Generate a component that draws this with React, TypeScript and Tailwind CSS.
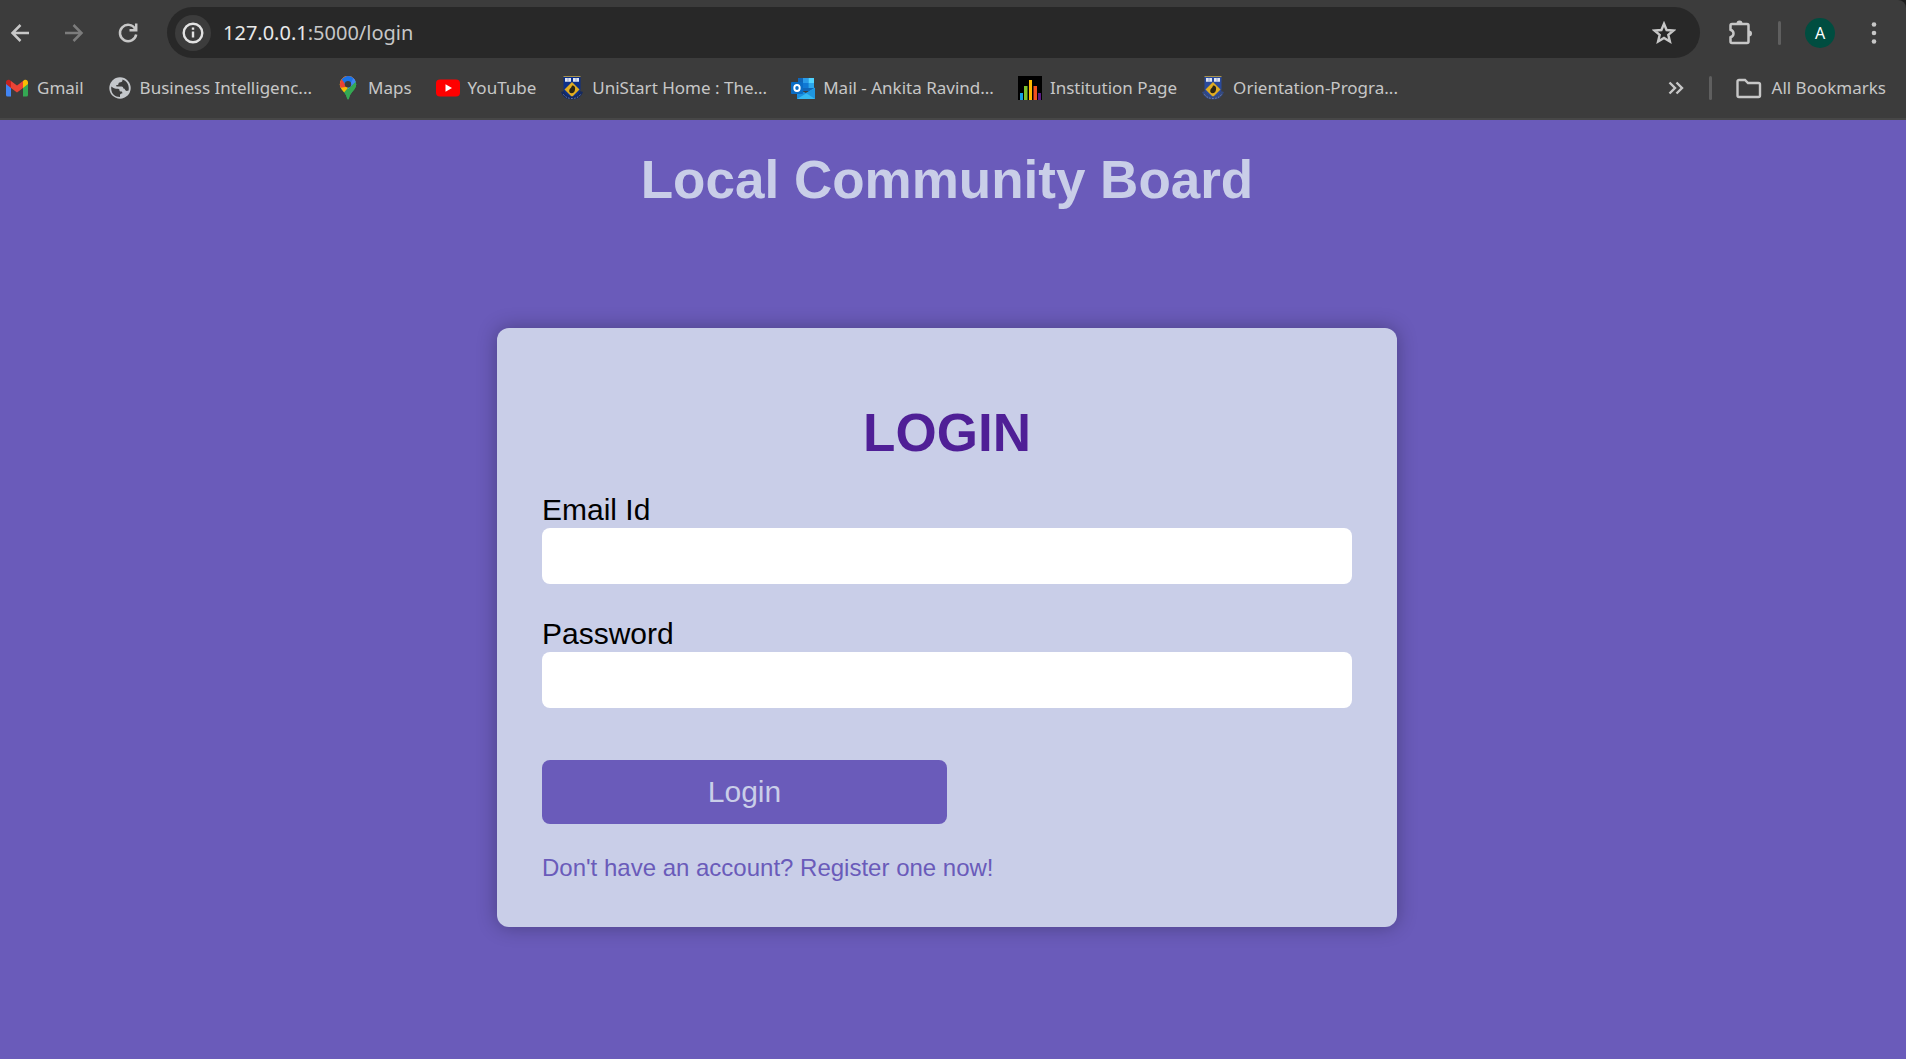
import React from "react";

const iconProps = { fill: "none", stroke: "currentColor", strokeWidth: 2 };

function BackIcon() {
  return (
    <svg viewBox="0 0 24 24" className="size-6" {...iconProps} strokeWidth={2.5}>
      <path d="M21 12H4.500M12.500 4 4.500 12l8 8" />
    </svg>
  );
}

function ForwardIcon() {
  return (
    <svg viewBox="0 0 24 24" className="size-6" {...iconProps} strokeWidth={2.5}>
      <path d="M3 12h16.500M11.500 4l8 8-8 8" />
    </svg>
  );
}

function ReloadIcon() {
  return (
    <svg viewBox="0 0 24 24" className="size-6" {...iconProps} strokeWidth={2.5}>
      <path d="M19.300 8A8.200 8.200 0 1 0 20.200 13.500" />
      <path d="M20.200 2.500v6.700h-6.700" />
    </svg>
  );
}

function InfoIcon() {
  return (
    <svg viewBox="0 0 24 24" className="size-6" {...iconProps}>
      <circle cx="12" cy="12" r="9.300" strokeWidth="2.400" />
      <path d="M12 10.500v6M12 6.500v2.300" strokeWidth="2.400" />
    </svg>
  );
}

function StarIcon() {
  return (
    <svg viewBox="0 0 24 24" className="size-6" {...iconProps} strokeWidth={2.4}>
      <path d="m12 2.800 2.600 6.200 6.900.5-5.200 4.400 1.600 6.600-5.900-3.500-5.900 3.500 1.600-6.600L2.500 9.500l6.900-.5z" />
    </svg>
  );
}

function PuzzleIcon() {
  return (
    <svg viewBox="0 0 28 28" className="size-7" {...iconProps}>
      <path
        d="M6 5h15a1.500 1.500 0 0 1 1.500 1.500v16a1.500 1.500 0 0 1-1.500 1.500h-15a1.500 1.500 0 0 1-1.500-1.500v-4.200c2-.7 3-2 3-3.800s-1-3.100-3-3.800V6.500a1.500 1.500 0 0 1 1.500-1.500z"
        strokeWidth="2.500"
      />
      <path d="M10.500 4.500a3 3 0 0 1 6 0zM23 11.500a3 3 0 0 1 0 6z" fill="currentColor" stroke="none" />
    </svg>
  );
}

function MoreIcon() {
  return (
    <svg viewBox="0 0 24 24" className="size-6" fill="currentColor">
      <circle cx="12" cy="3.500" r="2.300" />
      <circle cx="12" cy="12" r="2.300" />
      <circle cx="12" cy="20.500" r="2.300" />
    </svg>
  );
}

function ChevronsIcon() {
  return (
    <svg viewBox="0 0 24 24" className="size-6" {...iconProps} strokeWidth={2.4}>
      <path d="m6.500 6.500 5.500 5.500-5.500 5.500M13.500 6.500l5.500 5.500-5.500 5.500" />
    </svg>
  );
}

function FolderIcon() {
  return (
    <svg viewBox="0 0 26 24" className="h-6 w-[26px]" {...iconProps} strokeWidth={2.4}>
      <path d="M3 4h6l3 3h10.500a1.500 1.500 0 0 1 1.500 1.500v11a1.500 1.500 0 0 1-1.500 1.500h-19.500a1.500 1.500 0 0 1-1.500-1.500v-14A1.500 1.500 0 0 1 3 4z" />
    </svg>
  );
}

function GmailIcon() {
  return (
    <svg viewBox="0 0 24 24" className="size-6">
      <path d="M1 6v13a1.500 1.500 0 0 0 1.500 1.500H6V10z" fill="#4285f4" />
      <path d="M23 6v13a1.500 1.500 0 0 1-1.500 1.500H18V10z" fill="#34a853" />
      <path d="M6 5v7l6 4.500 6-4.500V5l-6 4.500z" fill="#ea4335" />
      <path d="M1 6.500V8l5 4V5l-1-.7C3.200 3 1 4.300 1 6.500z" fill="#c5221f" />
      <path d="M23 6.500V8l-5 4V5l1-.7c1.800-1.300 4 0 4 2.200z" fill="#fbbc04" />
    </svg>
  );
}

function GlobeIcon() {
  return (
    <svg viewBox="0 0 24 24" className="size-6">
      <circle cx="12" cy="12" r="10.700" fill="#c4c7cb" />
      <path
        d="M3.200 12.500c0-1 0-1.200.3-2 1.500 1.500 3.500 2.300 6.500 2.300 1 0 1.500.7 1.500 1.700 0 .8.500 1 1.500 1s1.300.5 1.300 1.300v.7c-1.500 0-2.300.6-2.300 1.500v2C7 21 3.200 17.500 3.200 12.500z"
        fill="#3c3c3c"
      />
      <path
        d="M14.500 3.500c0 1.800-.5 2.500-2 2.700-1.500.1-2 .6-2 1.600s-.5 1.200-1.500 1.300c-1.200.1-1.300 1.400 0 1.500h4.500c1.200 0 1.800.8 1.800 1.900 1.200 0 1.700.6 1.900 1.600.3 1 1.800 1 3.400.4C21.500 10 19.500 5.300 14.500 3.500z"
        fill="#3c3c3c"
      />
    </svg>
  );
}

function MapsIcon() {
  return (
    <svg viewBox="0 0 24 24" className="size-6">
      <defs>
        <clipPath id="pin">
          <path d="M12 0a8.200 8.200 0 0 0-8.200 8.200c0 3 1.500 4.800 3.600 7.300 2 2.500 3 4 3.600 6.800.3 1.700 1.700 1.700 2 0 .6-2.800 1.600-4.300 3.600-6.800 2.100-2.500 3.600-4.300 3.600-7.300A8.200 8.200 0 0 0 12 0z" />
        </clipPath>
      </defs>
      <g clipPath="url(#pin)">
        <path d="M0 0h24v24H0z" fill="#34a853" />
        <path d="M2 0h20L5 20H2z" fill="#fbbc04" />
        <path d="M0 0h24L9.500 11 3 12z" fill="#ea4335" />
        <path d="M5.500 3 12-1h5l3 4-8 9-3-4z" fill="#1a73e8" />
        <path d="m18 1 4 6-11 13 1-8z" fill="#4285f4" />
        <path d="m20.500 5 .5 7-9 12-4-7z" fill="#34a853" />
      </g>
      <circle cx="12" cy="8.200" r="3.200" fill="#3c3c3c" />
    </svg>
  );
}

function YouTubeIcon() {
  return (
    <svg viewBox="0 0 24 24" className="size-6">
      <rect y="3.500" width="24" height="17" rx="4" fill="#f00" />
      <path d="m9.500 8.300 6.500 3.700-6.500 3.700z" fill="#fff" />
    </svg>
  );
}

function CrestIcon({ blue, band }: { blue: string; band: string }) {
  return (
    <svg viewBox="0 0 24 24" className="size-6">
      <path d="M3.500 1h17v12c0 4-3.500 7-8.500 9-5-2-8.500-5-8.500-9z" fill={blue} />
      <path d="M3.500.500h17" stroke="#a8924a" />
      <path d="M5 2h6v3.800H5zM13 2h6v3.800h-6z" fill="#dfe5f2" />
      <path d="M8 2v3.800M16 2v3.800" stroke="#8899c8" strokeWidth=".8" />
      <path d="m12 6 7.500 7.500L12 21l-7.500-7.500z" fill="#e0ac20" />
      <path d="M12 9.500c2.700 0 3.500 2 3 4.200-.3 2.300-1.500 3.500-3.300 3.500-2 0-2.900-1.400-2.300-3.400.6-1.700 2.100-1.900 2.600-4.300z" fill="#2b2413" />
      <path d="M2.500 15.500c1.500 4.500 5.200 6.500 9.500 6.500s8-2 9.500-6.500" fill="none" stroke={band} strokeWidth="3.200" />
      <path d="M3.500 18.500c2 2.800 5 4 8.500 4s6.500-1.200 8.500-4" fill="none" stroke="#7f90c0" strokeDasharray="1.200 1.800" />
    </svg>
  );
}

function OutlookIcon() {
  return (
    <svg viewBox="0 0 24 24" className="size-6">
      <path d="M7 2h16v13H7z" fill="#1066b8" />
      <path d="M12 2h5.500v5H12z" fill="#2a9be8" />
      <path d="M17.500 2H23v5h-5.500z" fill="#50d4ff" />
      <path d="M12 7h5.500v5H12z" fill="#0f78d4" />
      <path d="M17.500 7H23v5h-5.500z" fill="#2ba6ec" />
      <path d="M6 12.500 15 17l9-5.500V23H6z" fill="#1a8fe0" />
      <path d="M6 23 24 12v11z" fill="#35b8f1" />
      <path d="m15 17 9 6V12z" fill="#1f96e0" />
      <rect y="6" width="12" height="12" rx="1" fill="#0a6cc4" />
      <ellipse cx="6" cy="12" rx="2.700" ry="3" fill="none" stroke="#fff" strokeWidth="1.900" />
    </svg>
  );
}

function BarsIcon() {
  return (
    <svg viewBox="0 0 24 24" className="size-6">
      <path d="M0 0h24v24H0z" fill="#000" />
      <path d="M2 17h3v7H2z" fill="#12a0e6" />
      <path d="M6 10h3.500v14H6z" fill="#7cc12c" />
      <path d="M11 4h3v20h-3z" fill="#ffb900" />
      <path d="M15.500 10H19v14h-3.500z" fill="#f2501e" />
      <path d="M20 17h3v7h-3z" fill="#5a1a83" />
    </svg>
  );
}

const bookmarks = [
  { label: "Gmail", icon: <GmailIcon /> },
  { label: "Business Intelligenc...", icon: <GlobeIcon /> },
  { label: "Maps", icon: <MapsIcon /> },
  { label: "YouTube", icon: <YouTubeIcon /> },
  { label: "UniStart Home : The...", icon: <CrestIcon blue="#0b2f8a" band="#15295f" /> },
  { label: "Mail - Ankita Ravind...", icon: <OutlookIcon /> },
  { label: "Institution Page", icon: <BarsIcon /> },
  { label: "Orientation-Progra...", icon: <CrestIcon blue="#2a4a9c" band="#34497f" /> },
];

function BrowserBar() {
  return (
    <header className="border-b-2 border-[#474747] bg-[#1f1f1f] font-['Noto_Sans','Open_Sans',sans-serif] text-[#c7c7c7]">
      <div className="rounded-tr-lg bg-[#3c3c3c]">
        <div className="flex h-[65px] items-center pr-5 pl-2">
          <div className="flex items-center gap-[30px]">
            <button aria-label="Back"><BackIcon /></button>
            <button aria-label="Forward" className="text-[#7c7c7c]"><ForwardIcon /></button>
            <button aria-label="Reload"><ReloadIcon /></button>
          </div>
          <div className="ml-[27px] flex h-[51px] flex-1 items-center gap-3 rounded-full bg-[#282828] px-2">
            <button aria-label="View site information" className="flex size-9 items-center justify-center rounded-full bg-[#3c3c3c] text-[#e3e3e3]">
              <InfoIcon />
            </button>
            <div className="relative flex-1 text-xl">
              <input aria-label="Address" defaultValue="127.0.0.1:5000/login" className="w-full bg-transparent text-transparent outline-none" />
              <span aria-hidden="true" className="pointer-events-none absolute inset-0">
                <span className="text-[#e8e8e8]">127.0.0.1</span>:5000/login
              </span>
            </div>
            <button aria-label="Bookmark this tab" className="mr-4"><StarIcon /></button>
          </div>
          <button aria-label="Extensions" className="ml-[26px]"><PuzzleIcon /></button>
          <span className="ml-6 h-6 w-[3px] rounded-full bg-[#5f5f5f]" />
          <button aria-label="Profile" className="ml-6 flex size-[30px] items-center justify-center rounded-full bg-[#004d40] text-base text-white">A</button>
          <button aria-label="Menu" className="ml-[27px]"><MoreIcon /></button>
        </div>
        <nav aria-label="Bookmarks" className="flex h-[53px] items-start pt-[11px] pr-5 pl-[5px] text-[17px] leading-6">
          <div className="flex flex-1 gap-6">
            {bookmarks.map((item) => (
              <a key={item.label} href="#" className="flex items-center gap-2 whitespace-nowrap">
                {item.icon}
                {item.label}
              </a>
            ))}
          </div>
          <button aria-label="More bookmarks"><ChevronsIcon /></button>
          <span className="ml-[22px] h-6 w-[3px] rounded-full bg-[#5f5f5f]" />
          <button className="ml-6 flex items-center gap-[10px] whitespace-nowrap">
            <FolderIcon />
            All Bookmarks
          </button>
        </nav>
      </div>
    </header>
  );
}

function Field({ id, label, type }: { id: string; label: string; type: string }) {
  return (
    <div className="flex flex-col gap-[2px]">
      <label htmlFor={id} className="leading-8 text-black">{label}</label>
      <input id={id} type={type} className="h-14 w-full rounded-lg bg-white px-4 text-black outline-none" />
    </div>
  );
}

export default function App() {
  return (
    <div className="flex min-h-screen flex-col bg-[#6a5bba]">
      <BrowserBar />
      <main className="flex flex-1 flex-col items-center pt-[30px] pr-3 pb-8 font-['Liberation_Sans',Arial,sans-serif]">
        <h1 className="text-[53px] leading-[60px] font-bold text-[#c9cee8]">Local Community Board</h1>
        <form className="mt-[118px] w-full max-w-[900px] rounded-xl bg-[#c9cee8] px-[45px] pt-[75px] pb-[45px] text-[30px] shadow-[0_0_20px_rgba(0,0,0,0.3)]">
          <h2 className="text-center text-[53px] leading-[60px] font-bold text-[#4f1f96]">LOGIN</h2>
          <div className="mt-[31px] flex flex-col gap-[34px]">
            <Field id="email" label="Email Id" type="email" />
            <Field id="password" label="Password" type="password" />
          </div>
          <button type="button" className="mt-[52px] block h-16 w-1/2 rounded-lg bg-[#6a5bba] pb-[2px] text-[#c9cee8]">Login</button>
          <a href="#" className="mt-[30px] block text-2xl leading-7 text-[#6a5bba]">Don't have an account? Register one now!</a>
        </form>
      </main>
    </div>
  );
}
